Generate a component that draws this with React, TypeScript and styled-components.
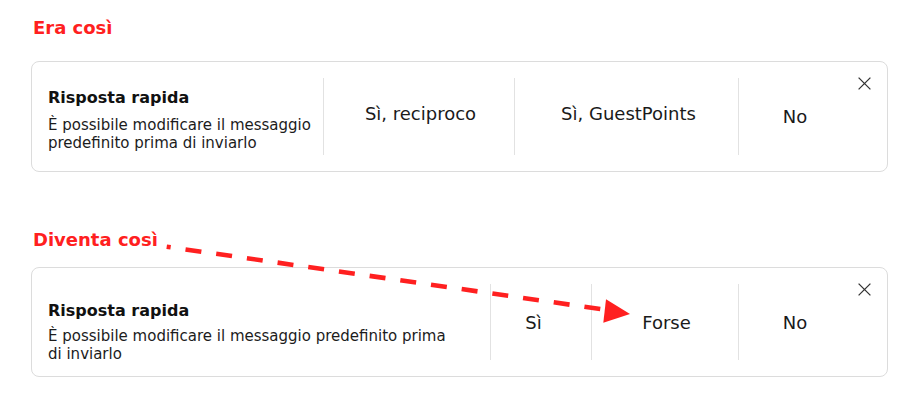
import React from 'react';
import styled, { createGlobalStyle } from 'styled-components';

const GlobalStyle = createGlobalStyle`
  html, body {
    margin: 0;
    padding: 0;
    background: #ffffff;
  }

  body {
    font-family: 'DejaVu Sans', Verdana, sans-serif;
  }
`;

const Page = styled.div`
  position: relative;
  width: 923px;
  height: 413px;
  padding: 17px 35px 0 31px;
  box-sizing: border-box;
  overflow: hidden;
`;

const Heading = styled.h2<{ $top: number }>`
  margin: ${(p) => p.$top}px 0 0 2px;
  font-size: 18px;
  line-height: 21px;
  font-weight: bold;
  color: #ff2020;
`;

const Card = styled.div<{ $top: number }>`
  position: relative;
  margin-top: ${(p) => p.$top}px;
  padding: 16px 36px 16px 0;
  border: 1px solid #dcdcdc;
  border-radius: 8px;
  background: #ffffff;
`;

const Row = styled.div<{ $h: number }>`
  display: flex;
  height: ${(p) => p.$h}px;
`;

const Info = styled.div<{ $w: number; $top: number; $pr: number }>`
  flex: 0 0 ${(p) => p.$w}px;
  box-sizing: border-box;
  padding: ${(p) => p.$top}px ${(p) => p.$pr}px 0 16px;
`;

const Title = styled.div`
  font-size: 16px;
  line-height: 19px;
  font-weight: bold;
  color: #111111;
`;

const Desc = styled.p<{ $gap: number }>`
  margin: ${(p) => p.$gap}px 0 0;
  font-size: 15px;
  line-height: 18px;
  color: #1c1c1c;
`;

const Divider = styled.div`
  flex: 0 0 1px;
  background: #e2e2e2;
`;

const Option = styled.div<{ $w?: number; $pl?: number; $pr?: number; $pb?: number }>`
  flex: ${(p) => (p.$w ? `0 0 ${p.$w}px` : '1')};
  box-sizing: border-box;
  display: flex;
  align-items: center;
  justify-content: center;
  padding: 0 ${(p) => p.$pr || 0}px ${(p) => p.$pb || 0}px ${(p) => p.$pl || 0}px;
  font-size: 18px;
  color: #1a1a1a;
  white-space: nowrap;
`;

const Close = styled.button`
  position: absolute;
  top: 15px;
  right: 16px;
  width: 13px;
  height: 13px;
  padding: 0;
  border: none;
  background: none;
  cursor: pointer;
  display: block;

  svg {
    display: block;
  }
`;

const Arrow = styled.svg`
  position: absolute;
  top: 0;
  left: 0;
  pointer-events: none;
`;

const CloseIcon = () => (
  <svg width="13" height="13" viewBox="0 0 13 13">
    <path d="M0.6 0.6 L12.4 12.4 M12.4 0.6 L0.6 12.4" stroke="#333333" strokeWidth="1.3" fill="none" />
  </svg>
);

const App = () => {
  return (
    <Page>
      <GlobalStyle />
      <Heading $top={0}>Era così</Heading>
      <Card $top={23}>
        <Row $h={77}>
          <Info $w={291} $top={10} $pr={12}>
            <Title>Risposta rapida</Title>
            <Desc $gap={9}>È possibile modificare il messaggio predefinito prima di inviarlo</Desc>
          </Info>
          <Divider />
          <Option $w={190} $pl={3} $pb={6}>Sì, reciproco</Option>
          <Divider />
          <Option $w={223} $pl={4} $pb={6}>Sì, GuestPoints</Option>
          <Divider />
          <Option>No</Option>
        </Row>
        <Close aria-label="Chiudi">
          <CloseIcon />
        </Close>
      </Card>

      <Heading $top={57}>Diventa così</Heading>
      <Card $top={17}>
        <Row $h={76}>
          <Info $w={458} $top={17} $pr={32}>
            <Title>Risposta rapida</Title>
            <Desc $gap={7}>È possibile modificare il messaggio predefinito prima di inviarlo</Desc>
          </Info>
          <Divider />
          <Option $w={100} $pr={15}>Sì</Option>
          <Divider />
          <Option $w={146} $pl={3}>Forse</Option>
          <Divider />
          <Option>No</Option>
        </Row>
        <Close aria-label="Chiudi">
          <CloseIcon />
        </Close>
      </Card>

      <Arrow width="923" height="413" viewBox="0 0 923 413">
        <line
          x1="166.7"
          y1="246.7"
          x2="605"
          y2="309.7"
          stroke="#ff2020"
          strokeWidth="4.6"
          strokeDasharray="16 15"
          strokeDashoffset="12"
        />
        <polygon points="606,299.3 630,314 603.3,322.7" fill="#ff2020" />
      </Arrow>
    </Page>
  );
};

export default App;
